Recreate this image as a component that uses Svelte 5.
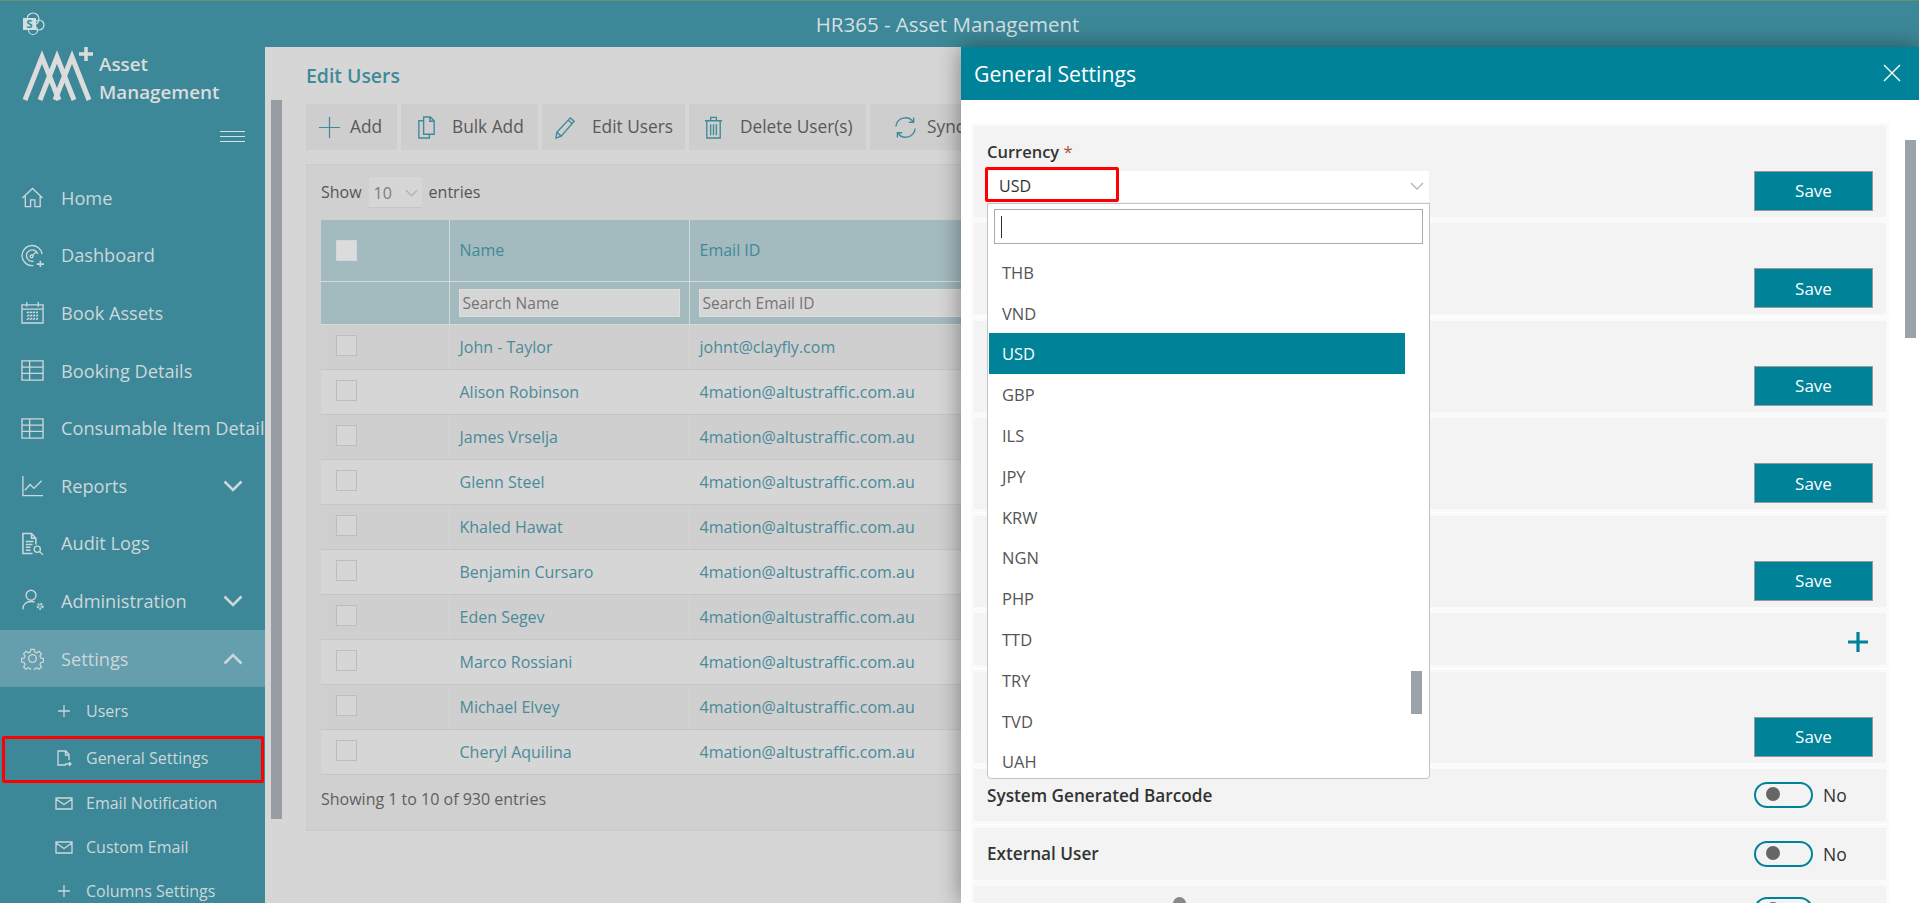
<script>
	const navItems = [
		{ label: 'Home', icon: 'home' },
		{ label: 'Dashboard', icon: 'gauge' },
		{ label: 'Book Assets', icon: 'calendar' },
		{ label: 'Booking Details', icon: 'table' },
		{ label: 'Consumable Item Details', icon: 'table' },
		{ label: 'Reports', icon: 'chart', caret: 'down' },
		{ label: 'Audit Logs', icon: 'audit' },
		{ label: 'Administration', icon: 'admin', caret: 'down' },
		{ label: 'Settings', icon: 'gear', caret: 'up', active: true }
	];

	const subItems = [
		{ label: 'Users', icon: 'plus' },
		{ label: 'General Settings', icon: 'file' },
		{ label: 'Email Notification', icon: 'mail' },
		{ label: 'Custom Email', icon: 'mail' },
		{ label: 'Columns Settings', icon: 'plus' }
	];

	const users = [
		['John - Taylor', 'johnt@clayfly.com'],
		['Alison Robinson', '4mation@altustraffic.com.au'],
		['James Vrselja', '4mation@altustraffic.com.au'],
		['Glenn Steel', '4mation@altustraffic.com.au'],
		['Khaled Hawat', '4mation@altustraffic.com.au'],
		['Benjamin Cursaro', '4mation@altustraffic.com.au'],
		['Eden Segev', '4mation@altustraffic.com.au'],
		['Marco Rossiani', '4mation@altustraffic.com.au'],
		['Michael Elvey', '4mation@altustraffic.com.au'],
		['Cheryl Aquilina', '4mation@altustraffic.com.au']
	];

	const currencies = ['THB', 'VND', 'USD', 'GBP', 'ILS', 'JPY', 'KRW', 'NGN', 'PHP', 'TTD', 'TRY', 'TVD', 'UAH'];
</script>

{#snippet icon(name)}
	<svg class="icon" viewBox="0 0 24 24" fill="none" stroke="currentColor" stroke-width="1.4">
		{#if name === 'home'}
			<path d="M1.5 12.5 12 2.5l10.5 10M4.5 10.5V21.5h5.5v-7h4.500v7h5.500V10.500" />
		{:else if name === 'gauge'}
			<path d="M13 22.500A10.500 10.500 0 1 1 22 10.500M13 18A6 6 0 1 1 17.500 10.500M11.500 12.500l4-4" />
			<circle cx="11" cy="13" r="1.500" />
			<path d="M16.500 21h7.500M20.200 17.500v6.500" stroke-width="1.600" />
		{:else if name === 'calendar'}
			<path d="M1 4h22v19H1zM1 8.500h22M6 1v5M18 1v5" />
			<path d="M6 12h12M6 15.500h12M6 19h12M8 11v9.500M11 11v9.500M14 11v9.500M17 11v9.500" stroke-dasharray="1.600 1.600" />
		{:else if name === 'table'}
			<path d="M1 2h22v20H1zM1 8.500h22M1 15h22M9 2v20" />
		{:else if name === 'chart'}
			<path d="M2 2v20.500h21M4 17l5.500-6 4 4 8-8" />
		{:else if name === 'audit'}
			<path d="M15.500 13V6.500L11 1.500H2v21h10M11 1.500v5h4.500" stroke-width="1.600" />
			<path d="M5 10h8M5 13h7M5 16h5M5 19h5" stroke-width="1.600" />
			<circle cx="17" cy="18" r="3.200" />
			<path d="m19.500 20.500 3.500 3.500" />
		{:else if name === 'admin'}
			<circle cx="10.500" cy="6.500" r="5.200" />
			<path d="M2 21c0-5 3.500-8 8.500-8 1.500 0 2.700.3 3.700.8" />
			<circle cx="20" cy="18" r="2.300" stroke-width="2.800" stroke-dasharray="1.500 1" />
		{:else if name === 'gear'}
			<circle cx="12" cy="12" r="4" />
			<path d="M10 1.500h4l.6 3 2.300 1 2.600-1.700 2.800 2.800-1.700 2.600 1 2.300 2.900.5v4l-2.900.6-1 2.300 1.700 2.600-2.800 2.800-2.600-1.700-2.300 1-.6 3h-4l-.6-3-2.300-1-2.600 1.700-2.800-2.800 1.700-2.600-1-2.300-2.900-.6v-4l2.900-.5 1-2.300-1.700-2.600 2.800-2.800 2.600 1.700 2.300-1z" transform="translate(1.100 1.100) scale(.91)" />
		{/if}
	</svg>
{/snippet}

{#snippet subIcon(name)}
	<svg class="sub-icon" viewBox="0 0 18 18" fill="none" stroke="currentColor" stroke-width="1.300">
		{#if name === 'plus'}
			<path d="M3 9h12M9 3v12" />
		{:else if name === 'file'}
			<path d="M11 16H3V2h8l3 3.500V11M10.500 2v4h3.500M10 15h6M14 13l2 2-2 2" />
		{:else if name === 'mail'}
			<path d="M1 4h16v11H1zM1 5l8 5.500L17 5" />
		{/if}
	</svg>
{/snippet}

<div class="app">
	<header class="topbar">
		<svg class="sp-logo" viewBox="0 0 24 24" fill="none">
			<circle cx="11" cy="7" r="6" stroke="#cfe0e3" stroke-width="1.200" />
			<circle cx="17" cy="13" r="5" stroke="#cfe0e3" stroke-width="1.200" />
			<circle cx="11" cy="18" r="4.500" stroke="#cfe0e3" stroke-width="1.200" />
			<rect x="1" y="6" width="13" height="12" fill="#cfe0e3" />
			<text x="7.500" y="16" class="sp-letter">S</text>
		</svg>
		<span class="app-title">HR365 - Asset Management</span>
	</header>

	<div class="main">
		<aside class="sidebar">
			<div class="brand">
				<svg class="brand-mark" viewBox="0 0 72 50" fill="none" stroke="#dcdcdc" stroke-width="5">
					<path d="M3 50 20 7l17 43M18 50 35 7l17 43M33 50 50 7l17 43" />
					<path d="M57 4h14M64-3v14" stroke-width="3.500" />
				</svg>
				<div class="brand-name">Asset<br />Management</div>
			</div>
			<div class="hamburger"><span></span><span></span><span></span></div>
			<nav>
				{#each navItems as item}
					<div class="nav-item" class:active={item.active}>
						{@render icon(item.icon)}
						<span class="nav-label">{item.label}</span>
						{#if item.caret}
							<svg class="caret" class:up={item.caret === 'up'} viewBox="0 0 20 12" fill="none" stroke="currentColor" stroke-width="2.600"><path d="M1.500 1.500 10 10l8.500-8.500" /></svg>
						{/if}
					</div>
				{/each}
				<div class="sub-list">
					{#each subItems as item}
						<div class="sub-item">
							{@render subIcon(item.icon)}
							<span>{item.label}</span>
						</div>
					{/each}
				</div>
			</nav>
		</aside>

		<div class="content">
			<div class="page-scroll"></div>
			<div class="page">
				<h1>Edit Users</h1>
				<div class="toolbar">
					<button class="tool add">
						<svg viewBox="0 0 24 24" fill="none" stroke="currentColor" stroke-width="1.300"><path d="M1 12h22M12 1v22" /></svg>
						<span>Add</span>
					</button>
					<button class="tool bulk">
						<svg viewBox="0 0 24 24" fill="none" stroke="currentColor" stroke-width="1.400"><path d="M9 1h7l4 4v14H9zM15.500 1v4.500H20M9 5H4v18h11v-4" /></svg>
						<span>Bulk Add</span>
					</button>
					<button class="tool edit">
						<svg viewBox="0 0 24 24" fill="none" stroke="currentColor" stroke-width="1.400"><path d="M3 17 17 2l4 3.500L7.500 21 2 23zM3 17l4.500 4M15 4.500l4 3.500" /></svg>
						<span>Edit Users</span>
					</button>
					<button class="tool del">
						<svg viewBox="0 0 24 24" fill="none" stroke="currentColor" stroke-width="1.400"><path d="M3 5h18M9 5V1.500h6V5M5 5v18h14V5M9 8.500V20M12 8.500V20M15 8.500V20" /></svg>
						<span>Delete User(s)</span>
					</button>
					<button class="tool sync">
						<svg viewBox="0 0 24 24" fill="none" stroke="currentColor" stroke-width="1.400"><path d="M2 11A10 10 0 0 1 20 6M22 13a10 10 0 0 1-18 5M20.500 1.500V6.500h-5M3.500 22.500v-5h5" /></svg>
						<span>Sync</span>
					</button>
				</div>

				<section class="card">
					<div class="length">
						<span>Show</span>
						<div class="length-select">
							<span>10</span>
							<svg viewBox="0 0 14 8" fill="none" stroke="#a9a9a9" stroke-width="1.200"><path d="m1 1 6 6 6-6" /></svg>
						</div>
						<span>entries</span>
					</div>
					<table>
						<thead>
							<tr class="head-row">
								<th class="col-check"><span class="check head-check"></span></th>
								<th class="col-name">Name</th>
								<th>Email ID</th>
							</tr>
							<tr class="filter-row">
								<th></th>
								<th><input placeholder="Search Name" /></th>
								<th><input placeholder="Search Email ID" /></th>
							</tr>
						</thead>
						<tbody>
							{#each users as user}
								<tr>
									<td><span class="check"></span></td>
									<td>{user[0]}</td>
									<td>{user[1]}</td>
								</tr>
							{/each}
						</tbody>
					</table>
					<div class="info">Showing 1 to 10 of 930 entries</div>
				</section>
			</div>
		</div>
	</div>

	<div class="mark mark-nav"></div>

	<aside class="panel">
		<div class="panel-head">
			<span>General Settings</span>
			<svg viewBox="0 0 18 18" fill="none" stroke="#fff" stroke-width="1.400"><path d="m1 1 16 16M17 1 1 17" /></svg>
		</div>
		<div class="panel-body">
			<div class="panel-thumb"></div>
			<div class="set-row tall first">
				<div class="field">
					<div class="field-label">Currency <em>*</em></div>
					<div class="select">
						<span>USD</span>
						<svg viewBox="0 0 14 8" fill="none" stroke="#b4b4b4" stroke-width="1.300"><path d="m1 1 6 6 6-6" /></svg>
					</div>
				</div>
				<button class="save">Save</button>
			</div>
			{#each [1, 2, 3, 4] as n (n)}
				<div class="set-row tall"><button class="save">Save</button></div>
			{/each}
			<div class="set-row short plus-row">
				<svg viewBox="0 0 20 20" fill="none" stroke="#008299" stroke-width="3.200"><path d="M0 10h20M10 0v20" /></svg>
			</div>
			<div class="set-row tall"><button class="save">Save</button></div>
			<div class="set-row short toggle-row">
				<span class="row-label">System Generated Barcode</span>
				<div class="toggle-wrap"><span class="toggle"></span><span>No</span></div>
			</div>
			<div class="set-row short toggle-row">
				<span class="row-label">External User</span>
				<div class="toggle-wrap"><span class="toggle"></span><span>No</span></div>
			</div>
			<div class="set-row short toggle-row last">
				<span class="hint-dot"></span>
				<div class="toggle-wrap"><span class="toggle"></span></div>
			</div>

			<div class="dropdown">
				<div class="dd-search"><span class="cursor"></span></div>
				<ul>
					{#each currencies as code}
						<li class:selected={code === 'USD'}>{code}</li>
					{/each}
				</ul>
				<div class="dd-thumb"></div>
			</div>
			<div class="mark mark-usd"></div>
		</div>
	</aside>
</div>

<style>
	:global(body) {
		margin: 0;
		background: #d6d6d6;
	}

	.app {
		position: relative;
		width: 1919px;
		height: 903px;
		overflow: hidden;
		font-family: 'Open Sans', 'Liberation Sans', sans-serif;
		color: #555;
	}

	.topbar {
		position: relative;
		display: flex;
		align-items: center;
		justify-content: center;
		height: 46px;
		padding-right: 24px;
		background: #3d8898;
		border-top: 1px solid #66906f;
	}

	.sp-logo {
		position: absolute;
		left: 22px;
		top: 11px;
		width: 24px;
		height: 24px;
	}

	.sp-letter {
		font-size: 11px;
		font-weight: 700;
		text-anchor: middle;
		fill: #3d8898;
	}

	.app-title {
		font-size: 20.500px;
		color: #d4dfe2;
	}

	.main {
		display: flex;
		height: 856px;
	}

	.sidebar {
		flex: 0 0 265px;
		width: 265px;
		background: #3d8898;
		color: #ccd7da;
		overflow: hidden;
	}

	.brand {
		display: flex;
		align-items: flex-start;
		padding: 3px 0 0 22px;
		height: 81px;
		box-sizing: border-box;
	}

	.brand-mark {
		flex: none;
		width: 72px;
		height: 50px;
		overflow: visible;
	}

	.brand-name {
		margin: 0 0 0 5px;
		font-size: 18.800px;
		line-height: 28px;
		font-weight: 600;
		color: #dcdcdc;
	}

	.hamburger {
		display: flex;
		flex-direction: column;
		align-items: flex-end;
		gap: 4px;
		height: 41px;
		padding: 3px 20px 0 0;
		box-sizing: border-box;
	}

	.hamburger span {
		width: 25px;
		height: 1px;
		background: #d8e2e4;
	}

	.nav-item {
		display: flex;
		align-items: center;
		height: 57.600px;
		padding-left: 21px;
		white-space: nowrap;
	}

	.nav-item.active {
		background: #659eac;
	}

	.icon {
		flex: none;
		width: 23px;
		height: 23px;
		margin-right: 17px;
	}

	.nav-label {
		font-size: 18.200px;
	}

	.caret {
		position: absolute;
		left: 223px;
		width: 20px;
		height: 12px;
	}

	.caret.up {
		transform: rotate(180deg);
	}

	.sub-item {
		display: flex;
		align-items: center;
		height: 44px;
		padding-left: 55px;
		font-size: 16px;
		white-space: nowrap;
	}

	.sub-item:nth-child(1) {
		height: 48px;
	}

	.sub-item:nth-child(2) {
		height: 46px;
	}

	.sub-icon {
		flex: none;
		width: 18px;
		height: 18px;
		margin-right: 13px;
	}

	.content {
		flex: 1;
		display: flex;
		min-width: 0;
		background: #d6d6d6;
	}

	.page-scroll {
		flex: none;
		width: 11px;
		height: 719px;
		margin: 53px 0 0 6px;
		background: #979da3;
	}

	.page {
		flex: 1;
		min-width: 0;
		padding: 0 0 0 24px;
		overflow: hidden;
	}

	h1 {
		margin: 0;
		padding-top: 16px;
		height: 57px;
		box-sizing: border-box;
		font-size: 19.400px;
		line-height: 26px;
		font-weight: 600;
		color: #3f8a99;
	}

	.toolbar {
		display: flex;
		gap: 4px;
		white-space: nowrap;
	}

	.tool {
		display: flex;
		align-items: center;
		flex: none;
		height: 46px;
		padding: 0 0 2px;
		border: 0;
		background: #cecece;
		font: inherit;
		font-size: 17.300px;
		color: #595959;
	}

	.tool svg {
		flex: none;
		width: 23px;
		height: 23px;
		margin-top: 2px;
		color: #3f8a99;
	}

	.add {
		width: 91px;
		padding-left: 12px;
		gap: 9px;
	}

	.bulk {
		width: 137px;
		padding-left: 14px;
		gap: 14px;
	}

	.edit {
		width: 143px;
		padding-left: 12px;
		gap: 15px;
	}

	.del {
		width: 177px;
		padding-left: 13px;
		gap: 15px;
	}

	.sync {
		width: 200px;
		padding-left: 24px;
		gap: 10px;
	}

	.card {
		width: 1500px;
		height: 667px;
		margin-top: 14px;
		padding: 11px 0 0 14px;
		box-sizing: border-box;
		background: #d0d0d0;
		border: 1px solid #cbcbcb;
		font-size: 16px;
	}

	.length {
		display: flex;
		align-items: center;
		gap: 7px;
		height: 32px;
	}

	.length-select {
		display: flex;
		align-items: center;
		justify-content: space-between;
		width: 53px;
		height: 31px;
		padding: 3px 3px 0 5px;
		box-sizing: border-box;
		background: #d6d6d6;
		border-bottom: 1px solid #c6c6c6;
		color: #7c7c7c;
	}

	.length-select svg {
		width: 13px;
		height: 8px;
		margin-right: 1px;
	}

	table {
		width: 1400px;
		margin-top: 12px;
		border-collapse: collapse;
		table-layout: fixed;
		background: #d6d6d6;
	}

	.col-check {
		width: 128px;
	}

	.col-name {
		width: 240px;
	}

	th {
		padding: 0 0 0 10px;
		box-sizing: border-box;
		background: #a3babe;
		border: 1px solid #d3dadb;
		border-top: 0;
		font-size: 16px;
		font-weight: 400;
		text-align: left;
		color: #3f8a99;
	}

	th:first-child,
	td:first-child {
		padding-left: 15px;
		border-left: 0;
	}

	.head-row {
		height: 61px;
	}

	.filter-row {
		height: 43px;
	}

	input {
		display: block;
		width: 221px;
		height: 28px;
		margin-left: -1px;
		padding: 0 3px;
		box-sizing: border-box;
		background: #d6d6d6;
		border: 1px solid #dedede;
		font: inherit;
		font-size: 15.500px;
		outline: none;
	}

	input::placeholder {
		color: #757575;
		opacity: 1;
	}

	.filter-row th:last-child input {
		width: 300px;
	}

	td {
		height: 45px;
		padding: 0 0 0 10px;
		box-sizing: border-box;
		border: 1px solid #d6d6d6;
		border-top-color: #c6c6c6;
		border-bottom-color: #c6c6c6;
		color: #4a8a99;
		white-space: nowrap;
	}

	tbody tr:nth-child(odd) td {
		background: #cfcfcf;
	}

	tbody tr:nth-child(even) td {
		background: #d6d6d6;
		border-color: #d6d6d6;
		border-top-color: #c6c6c6;
		border-bottom-color: #c6c6c6;
	}

	.check {
		display: block;
		width: 21px;
		height: 21px;
		box-sizing: border-box;
		background: #d6d6d6;
		border: 1px solid #bdbdbd;
		margin-top: -3px;
	}

	.head-check {
		margin-top: 0;
		background: #dcdcdc;
		border-color: #d6d6d6;
	}

	.info {
		padding-top: 13px;
		color: #5f5f5f;
	}

	.mark {
		position: absolute;
		box-sizing: border-box;
		border: 3px solid #f00;
		border-radius: 2px;
		pointer-events: none;
	}

	.mark-nav {
		left: 2px;
		top: 736px;
		width: 262px;
		height: 47px;
	}

	.panel {
		position: absolute;
		left: 961px;
		top: 47px;
		right: 0;
		bottom: 0;
		background: #fff;
		box-shadow: 0 0 22px rgba(0, 0, 0, 0.42);
		color: #333;
	}

	.panel-head {
		display: flex;
		align-items: center;
		justify-content: space-between;
		height: 53px;
		padding: 0 18px 0 13px;
		background: #008299;
		color: #fff;
		font-size: 21.200px;
	}

	.panel-head svg {
		width: 18px;
		height: 18px;
		margin-top: -2px;
	}

	.panel-body {
		position: relative;
		display: flex;
		flex-direction: column;
		gap: 6.500px;
		width: 912px;
		padding: 25.500px 0 0 13px;
	}

	.panel-thumb {
		position: absolute;
		left: 944px;
		top: 40px;
		width: 11px;
		height: 198px;
		background: #9ba3aa;
	}

	.set-row {
		position: relative;
		display: flex;
		flex: none;
		box-sizing: border-box;
		background: #f3f3f3;
		box-shadow: 0 0 0 3px #fafafa;
	}

	.tall {
		height: 91px;
		align-items: flex-end;
		justify-content: flex-end;
		padding: 0 13px 6px 0;
	}

	.short {
		height: 52px;
		align-items: center;
	}

	.first {
		justify-content: space-between;
	}

	.field {
		align-self: flex-start;
		padding: 15px 0 0 13px;
	}

	.field-label {
		height: 30px;
		font-size: 16.500px;
		line-height: 22px;
		font-weight: 600;
		color: #333;
	}

	.field-label em {
		color: #a3533f;
		font-style: normal;
		font-weight: 400;
	}

	.select {
		display: flex;
		align-items: center;
		justify-content: space-between;
		width: 443px;
		height: 31px;
		padding: 0 5px 0 13px;
		box-sizing: border-box;
		background: #fff;
		font-size: 16px;
		margin-left: -1px;
	}

	.select svg {
		width: 14px;
		height: 8px;
	}

	.save {
		width: 119px;
		height: 40px;
		background: #008299;
		border: 1px solid #999;
		color: #fff;
		font: inherit;
		font-size: 17px;
	}

	.plus-row {
		justify-content: flex-end;
		padding-right: 18px;
	}

	.plus-row svg {
		width: 20px;
		height: 20px;
		margin-top: 5px;
	}

	.toggle-row {
		justify-content: space-between;
		padding: 0 0 0 13px;
	}

	.row-label {
		font-size: 17.200px;
		font-weight: 600;
		color: #333;
	}

	.toggle-wrap {
		display: flex;
		align-items: center;
		gap: 10px;
		width: 132px;
		font-size: 17.500px;
	}

	.toggle {
		position: relative;
		width: 59px;
		height: 26px;
		box-sizing: border-box;
		border: 2px solid #008299;
		border-radius: 13px;
	}

	.toggle::after {
		content: '';
		position: absolute;
		left: 10px;
		top: 3px;
		width: 14px;
		height: 14px;
		border-radius: 50%;
		background: #666;
	}

	.last {
		align-items: flex-start;
		padding-top: 11px;
	}

	.hint-dot {
		position: absolute;
		left: 199px;
		top: 11px;
		width: 13px;
		height: 13px;
		border-radius: 50%;
		background: #888;
	}

	.last .toggle-wrap {
		margin-left: auto;
	}

	.dropdown {
		position: absolute;
		left: 26px;
		top: 103px;
		width: 443px;
		height: 576px;
		box-sizing: border-box;
		background: #fff;
		border: 1px solid #c4c4c4;
		border-radius: 0 0 4px 4px;
		overflow: hidden;
	}

	.dd-search {
		display: flex;
		align-items: center;
		height: 35px;
		margin: 5px 6px 0;
		padding-left: 6px;
		box-sizing: border-box;
		border: 1px solid #aaa;
	}

	.cursor {
		width: 1px;
		height: 22px;
		background: #333;
	}

	ul {
		margin: 7.500px 0 0;
		padding: 0 0 0 1px;
		list-style: none;
		width: 416px;
	}

	li {
		display: flex;
		align-items: center;
		height: 40.800px;
		box-sizing: border-box;
		padding: 1px 0 0 13px;
		font-size: 16.500px;
		color: #555;
	}

	li.selected {
		background: #008299;
		color: #fff;
	}

	.dd-thumb {
		position: absolute;
		left: 423px;
		top: 467px;
		width: 11px;
		height: 43px;
		background: #9ba3aa;
	}

	.mark-usd {
		left: 24px;
		top: 67px;
		width: 134px;
		height: 35px;
	}
</style>
